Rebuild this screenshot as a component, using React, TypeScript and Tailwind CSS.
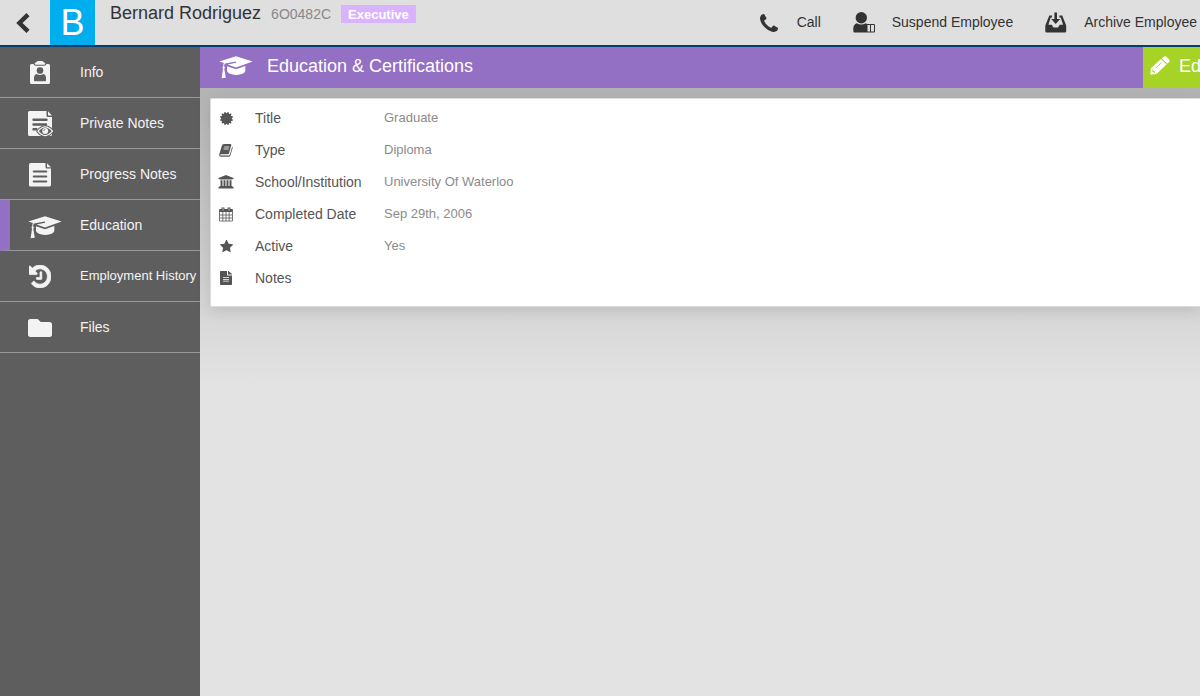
import type { ReactNode } from "react";
import { FaCertificate, FaFileAlt, FaFolder } from "react-icons/fa";

function CapIcon() {
  return (
    <svg width="34" height="23" viewBox="0 0 34 23" fill="currentColor" aria-hidden="true">
      <path d="M17 0.3 33.6 5.6 17 11.4 8.6 8.4 17.2 6.8 16.8 5.5 6 7.6Q5.3 8.5 5.1 10.2L5.9 11.2 5.3 12.9 6.8 21.7 2.6 22.2 4 12.8 3.4 11.3 4.2 10.2Q4.3 8.2 4.9 7.1L0.3 5.5Z" />
      <path d="M8 10.2 17 13.2 26.3 10.1V15Q25.5 18.6 17.3 19 9.2 18.6 8 15Z" />
    </svg>
  );
}

function BadgeIcon() {
  return (
    <svg width="20" height="23" viewBox="0 0 20 23" fill="currentColor" aria-hidden="true">
      <path
        fillRule="evenodd"
        d="M1.5 3H3.5Q4 4.8 6 4.8H14Q16 4.8 16.5 3H18.5Q20 3 20 4.5V21.5Q20 23 18.5 23H1.5Q0 23 0 21.5V4.5Q0 3 1.5 3ZM10 6.3A3.3 3.3 0 1 0 10 12.9 3.3 3.3 0 1 0 10 6.3ZM6.8 13Q4 13.5 4 17V19.5Q4 20.3 4.8 20.3H15.2Q16 20.3 16 19.5V17Q16 13.5 13.2 13 10 15.2 6.8 13Z"
      />
      <path d="M4.6 2.6Q4.8 1.4 6.3 1.2 7 0 8.2 0H11.8Q13 0 13.7 1.2 15.2 1.4 15.4 2.6 15.2 3.8 13.8 3.8H6.2Q4.8 3.8 4.6 2.6Z" />
    </svg>
  );
}

function PrivateNotesIcon() {
  return (
    <svg width="26" height="26" viewBox="-1 0 26 26" aria-hidden="true">
      <path fill="currentColor" d="M1.500 0H18.500V4.500Q18.500 6 20 6H24V23.500Q24 25 22.500 25H1.500Q0 25 0 23.500V1.500Q0 0 1.500 0ZM20 0.300 24 4.500H20Z" />
      <path stroke="#5e5e5e" strokeWidth="2.400" strokeLinecap="round" d="M5.500 8.700H18.500M5.500 13.500H18M5.500 18.300H8.500" />
      <path fill="#5e5e5e" stroke="#5e5e5e" strokeWidth="3" d="M10 20.200Q17 11.500 24.500 20.200 17 29 10 20.200Z" />
      <path fill="#5e5e5e" stroke="currentColor" strokeWidth="1.300" d="M10 20.200Q17 11.500 24.500 20.200 17 29 10 20.200Z" />
      <circle cx="17.200" cy="20" r="3" fill="currentColor" />
      <path fill="none" stroke="#5e5e5e" strokeWidth="0.800" d="M15.700 20Q15.700 18.500 17.200 18.500" />
    </svg>
  );
}

function NotesIcon() {
  return (
    <svg width="23" height="24" viewBox="0 0 23 24" aria-hidden="true">
      <path fill="currentColor" d="M1.5 0H16.5V4Q16.5 5.5 18 5.5H22V21.5Q22 23.5 20.5 23.5H1.5Q0 23.5 0 22V1.5Q0 0 1.5 0ZM18 0.2 22 4.2H18Z" />
      <path stroke="#5e5e5e" strokeWidth="2.200" strokeLinecap="round" d="M4.800 8.500H17.200M4.800 13.500H17.200M4.800 18.500H17.200" />
    </svg>
  );
}

function HistoryIcon() {
  return (
    <svg width="22" height="23" viewBox="128 128 1536 1536" fill="currentColor" preserveAspectRatio="none" aria-hidden="true">
      <path stroke="currentColor" strokeWidth="50" d="M1664 896q0 156-61 298t-164 245-245 164-298 61q-172 0-327-72.500t-264-204.500q-7-10-6.500-22.500t8.500-20.500l137-138q10-9 25-9 16 2 23 12 73 95 179 147t225 52q104 0 198.500-40.500t163.500-109.500 109.500-163.500 40.500-198.500-40.500-198.500-109.500-163.500-163.500-109.500-198.500-40.500q-98 0-188 35.500t-160 101.500l137 138q31 30 14 69-17 40-59 40h-448q-26 0-45-19t-19-45v-448q0-42 40-59 39-17 69 14l130 129q107-101 244.500-156.500t284.500-55.500q156 0 298 61t245 164 164 245 61 298zm-640-288v448q0 14-9 23t-23 9h-320q-14 0-23-9t-9-23v-64q0-14 9-23t23-9h224v-352q0-14 9-23t23-9h64q14 0 23 9t9 23z" />
    </svg>
  );
}

function ChevronIcon() {
  return (
    <svg width="14" height="20" viewBox="0 0 14 20" fill="none" stroke="currentColor" strokeWidth="4.4" aria-hidden="true">
      <path d="M12 1.6 3.4 10 12 18.400" />
    </svg>
  );
}

function PhoneIcon() {
  return (
    <svg width="18" height="18" viewBox="192 128 1408 1408" fill="currentColor" aria-hidden="true">
      <path d="M1600 1240q0 27-10 70.500t-21 68.500q-21 50-122 106-94 51-186 51-27 0-53-3.500t-57.500-12.500-47-14.500-55.500-20.500-49-18q-98-35-175-83-127-79-264-216t-216-264q-48-77-83-175-3-9-18-49t-20.500-55.500-14.500-47-12.500-57.500-3.500-53q0-92 51-186 56-101 106-122 25-11 68.500-21t70.500-10q14 0 21 3 18 6 53 76 11 19 30 54t35 63.500 31 53.500q3 4 17.500 25t21.500 35.500 7 28.500q0 20-28.500 50t-62 55-62 53-28.500 46q0 9 5 22.500t8.500 20.500 14 24 11.500 19q76 137 174 235t235 174q2 1 19 11.500t24 14 20.500 8.500 22.500 5q18 0 46-28.500t53-62 55-62 50-28.500q14 0 28.500 7t35.500 21.500 25 17.500q25 15 53.500 31t63.500 35 54 30q70 35 76 53 3 7 3 21z" />
    </svg>
  );
}

function SuspendIcon() {
  return (
    <svg width="22" height="21" viewBox="0 0 22 21" fill="currentColor" aria-hidden="true">
      <circle cx="8.300" cy="5.700" r="5.700" />
      <path d="M3.800 11.300Q8.300 13.800 12.800 11.300L14 12V20.500H1.500Q0.300 20.500 0.300 19V16Q0.600 12.300 3.800 11.300Z" />
      <path fill="none" stroke="currentColor" d="M14 12.500H21.500V20H14ZM17.500 12.500V20" />
    </svg>
  );
}

function ArchiveIcon() {
  return (
    <svg width="22" height="21" viewBox="0 0 22 21" fill="currentColor" aria-hidden="true">
      <path d="M9.400 0.500H12V7H15.200L10.700 12 6.200 7H9.400Z" />
      <path d="M4.300 3.500H7V5.500H5.700L3.400 12.800H6.700L8.500 15.500H13L14.800 12.800H18.100L15.700 5.500H14.400V3.500H17.200L21.200 13.500V19.300Q21.200 20.500 20 20.500H1.500Q0.300 20.500 0.300 19.300V13.500Z" />
    </svg>
  );
}

function PencilIcon() {
  return (
    <svg width="20" height="19" viewBox="0 0 20 19" aria-hidden="true">
      <path fill="currentColor" d="M0.300 18.700 0.800 12.300 11 3 16.500 8.500 6.500 18ZM11.800 2.300 13.600 0.800Q15.200-0.500 17 1.200L18.800 3.200Q20.500 4.800 19 6.200L17.200 7.800Z" />
      <path fill="none" stroke="#a6d325" strokeWidth="0.900" d="M2.700 13.800V15.500H4.500V16.900M5.500 12.200 11.500 6.700" />
    </svg>
  );
}

function BookIcon() {
  return (
    <svg width="14" height="13" viewBox="0 0 14 13" aria-hidden="true">
      <path fill="currentColor" d="M5 0H11.300Q12.600 0 12.300 1.300L10 9.200Q9.700 10.300 8.600 10.300H1.800Q1.100 10.300 1.300 11 1.500 11.500 2.200 11.500H9.700Q10.500 11.500 10.800 10.700L13 3.200V2.500Q13.900 2.800 13.600 3.900L11.400 11.500Q11 12.700 9.800 12.700H2Q0 12.500 0.200 10.400L2.800 2Q3.300 0.100 5 0Z" />
      <path stroke="#fff" strokeWidth="0.800" d="M5.200 3H10.300M4.600 5H9.700" />
    </svg>
  );
}

function InstitutionIcon() {
  return (
    <svg width="16" height="14" viewBox="0 0 16 14" fill="currentColor" aria-hidden="true">
      <path d="M8 0 15.500 3V4H14.500V4.600H1.500V4H0.500V3ZM2.500 5.200H4.500V11H5.500V5.200H7.500V11H8.500V5.200H10.500V11H11.500V5.200H13.500V11H14.500V12H15.500V13.500H0.500V12H1.500V11H2.500Z" />
    </svg>
  );
}

function CalendarIcon() {
  return (
    <svg width="14" height="15" viewBox="0 0 14 15" aria-hidden="true">
      <path fill="none" stroke="currentColor" strokeWidth="0.800" d="M0.500 2.500H13.500V14H0.500ZM0.500 8H13.500M0.500 11H13.500M3.800 5V14M7 5V14M10.200 5V14" />
      <path fill="currentColor" d="M0.500 2H13.500V5H0.500ZM2.500 0.500H5.500V4H2.500ZM8.500 0.500H11.500V4H8.500Z" />
      <path stroke="#fff" strokeWidth="0.600" d="M4 1.200V3.500M10 1.200V3.500" />
    </svg>
  );
}

function StarIcon() {
  return (
    <svg width="13" height="13" viewBox="64 96 1664 1600" fill="currentColor" aria-hidden="true">
      <path d="M1728 647q0 22-26 48l-363 354 86 500q1 7 1 20 0 21-10.500 35.500t-30.500 14.500q-19 0-40-12l-449-236-449 236q-22 12-40 12-21 0-31.500-14.500t-10.500-35.500q0-6 2-20l86-500-364-354q-25-27-25-48 0-37 56-46l502-73 225-455q19-41 49-41t49 41l225 455 502 73q56 9 56 46z" />
    </svg>
  );
}

type NavItem = { name: string; icon: ReactNode; size?: string; active?: boolean };

const navigation: NavItem[] = [
  { name: "Info", icon: <BadgeIcon /> },
  { name: "Private Notes", icon: <PrivateNotesIcon /> },
  { name: "Progress Notes", icon: <NotesIcon /> },
  { name: "Education", icon: <CapIcon />, active: true },
  { name: "Employment History", icon: <HistoryIcon />, size: "text-[13px]" },
  { name: "Files", icon: <FaFolder size={24} /> },
];

const actions = [
  { name: "Call", icon: <PhoneIcon /> },
  { name: "Suspend Employee", icon: <SuspendIcon /> },
  { name: "Archive Employee", icon: <ArchiveIcon /> },
];

const details = [
  { label: "Title", value: "Graduate", icon: <FaCertificate size={13} /> },
  { label: "Type", value: "Diploma", icon: <BookIcon /> },
  { label: "School/Institution", value: "University Of Waterloo", icon: <InstitutionIcon /> },
  { label: "Completed Date", value: "Sep 29th, 2006", icon: <CalendarIcon /> },
  { label: "Active", value: "Yes", icon: <StarIcon /> },
  { label: "Notes", value: "", icon: <FaFileAlt className="h-[14px] w-3" preserveAspectRatio="none" /> },
];

function Header() {
  return (
    <header className="flex h-[47px] shrink-0 border-b-2 border-[#003f72] bg-[#dfdfdf] text-[#333]">
      <button type="button" aria-label="Back" className="flex w-[50px] items-center justify-center pr-1">
        <ChevronIcon />
      </button>
      <div className="flex w-[45px] items-center justify-center bg-[#00aeef] text-4xl text-white">B</div>
      <div className="ml-[15px] flex h-7 items-center whitespace-nowrap">
        <h1 className="pb-0.5 text-lg leading-6">Bernard Rodriguez</h1>
        <span className="ml-2.5 text-sm text-[#888]">6O0482C</span>
        <span className="ml-2.5 bg-[#d9b3ff] px-[7px] pt-px text-[13px] leading-[17px] font-bold text-white">Executive</span>
      </div>
      <div className="ml-auto flex items-center gap-8 pr-[3px] text-sm whitespace-nowrap">
        {actions.map((action) => (
          <button key={action.name} type="button" className="flex h-full items-center gap-[17px]">
            <span className="flex w-[22px] justify-center">{action.icon}</span>
            <span className="pb-px">{action.name}</span>
          </button>
        ))}
      </div>
    </header>
  );
}

function Sidebar() {
  return (
    <nav className="w-[200px] shrink-0 bg-[#5e5e5e] text-[#f3f3f3]">
      {navigation.map((item) => (
        <a
          key={item.name}
          href="#"
          className={`flex h-[51px] items-center border-b border-[#999] whitespace-nowrap ${
            item.active ? "border-l-10 border-l-[#9370c4] pl-[18px]" : "pl-7"
          }`}
        >
          <span className={item.active ? "w-[52px] shrink-0 pt-1" : "mr-7 flex w-6 shrink-0 justify-center pt-px [&>svg]:shrink-0"}>
            {item.icon}
          </span>
          <span className={item.size ?? "text-sm"}>{item.name}</span>
        </a>
      ))}
    </nav>
  );
}

export default function App() {
  return (
    <div className="flex h-screen flex-col overflow-hidden font-['Liberation_Sans',Arial,sans-serif]">
      <Header />
      <div className="flex min-h-0 flex-1">
        <Sidebar />
        <main className="min-w-0 flex-1 bg-[#e3e3e3] bg-linear-to-b from-[#adadad] to-[#e3e3e3] to-[340px]">
          <div className="flex h-[41px] items-center bg-[#9370c4] text-white">
            <span className="ml-[19px] w-12 shrink-0">
              <CapIcon />
            </span>
            <h2 className="pb-1 text-lg leading-6">Education &amp; Certifications</h2>
            <button type="button" className="ml-auto flex h-full w-[57px] shrink-0 items-center gap-[9px] overflow-hidden bg-[#a6d325] pb-1 pl-[7px] text-lg leading-6">
              <span className="shrink-0">
                <PencilIcon />
              </span>
              Edit
            </button>
          </div>
          <dl className="mt-2.5 ml-2.5 rounded-l-xs border border-r-0 border-[#ddd] bg-white pt-[3px] pb-3 shadow-[0_4px_16px_rgba(0,0,0,0.12)]">
            {details.map((row) => (
              <div key={row.label} className="flex h-8 items-center">
                <dt className="flex w-[173px] shrink-0 items-center text-sm text-[#555]">
                  <span className="ml-[7px] flex w-4 shrink-0 justify-center">{row.icon}</span>
                  <span className="ml-[21px]">{row.label}</span>
                </dt>
                <dd className="text-[13px] text-[#8b8b8b]">{row.value}</dd>
              </div>
            ))}
          </dl>
        </main>
      </div>
    </div>
  );
}
